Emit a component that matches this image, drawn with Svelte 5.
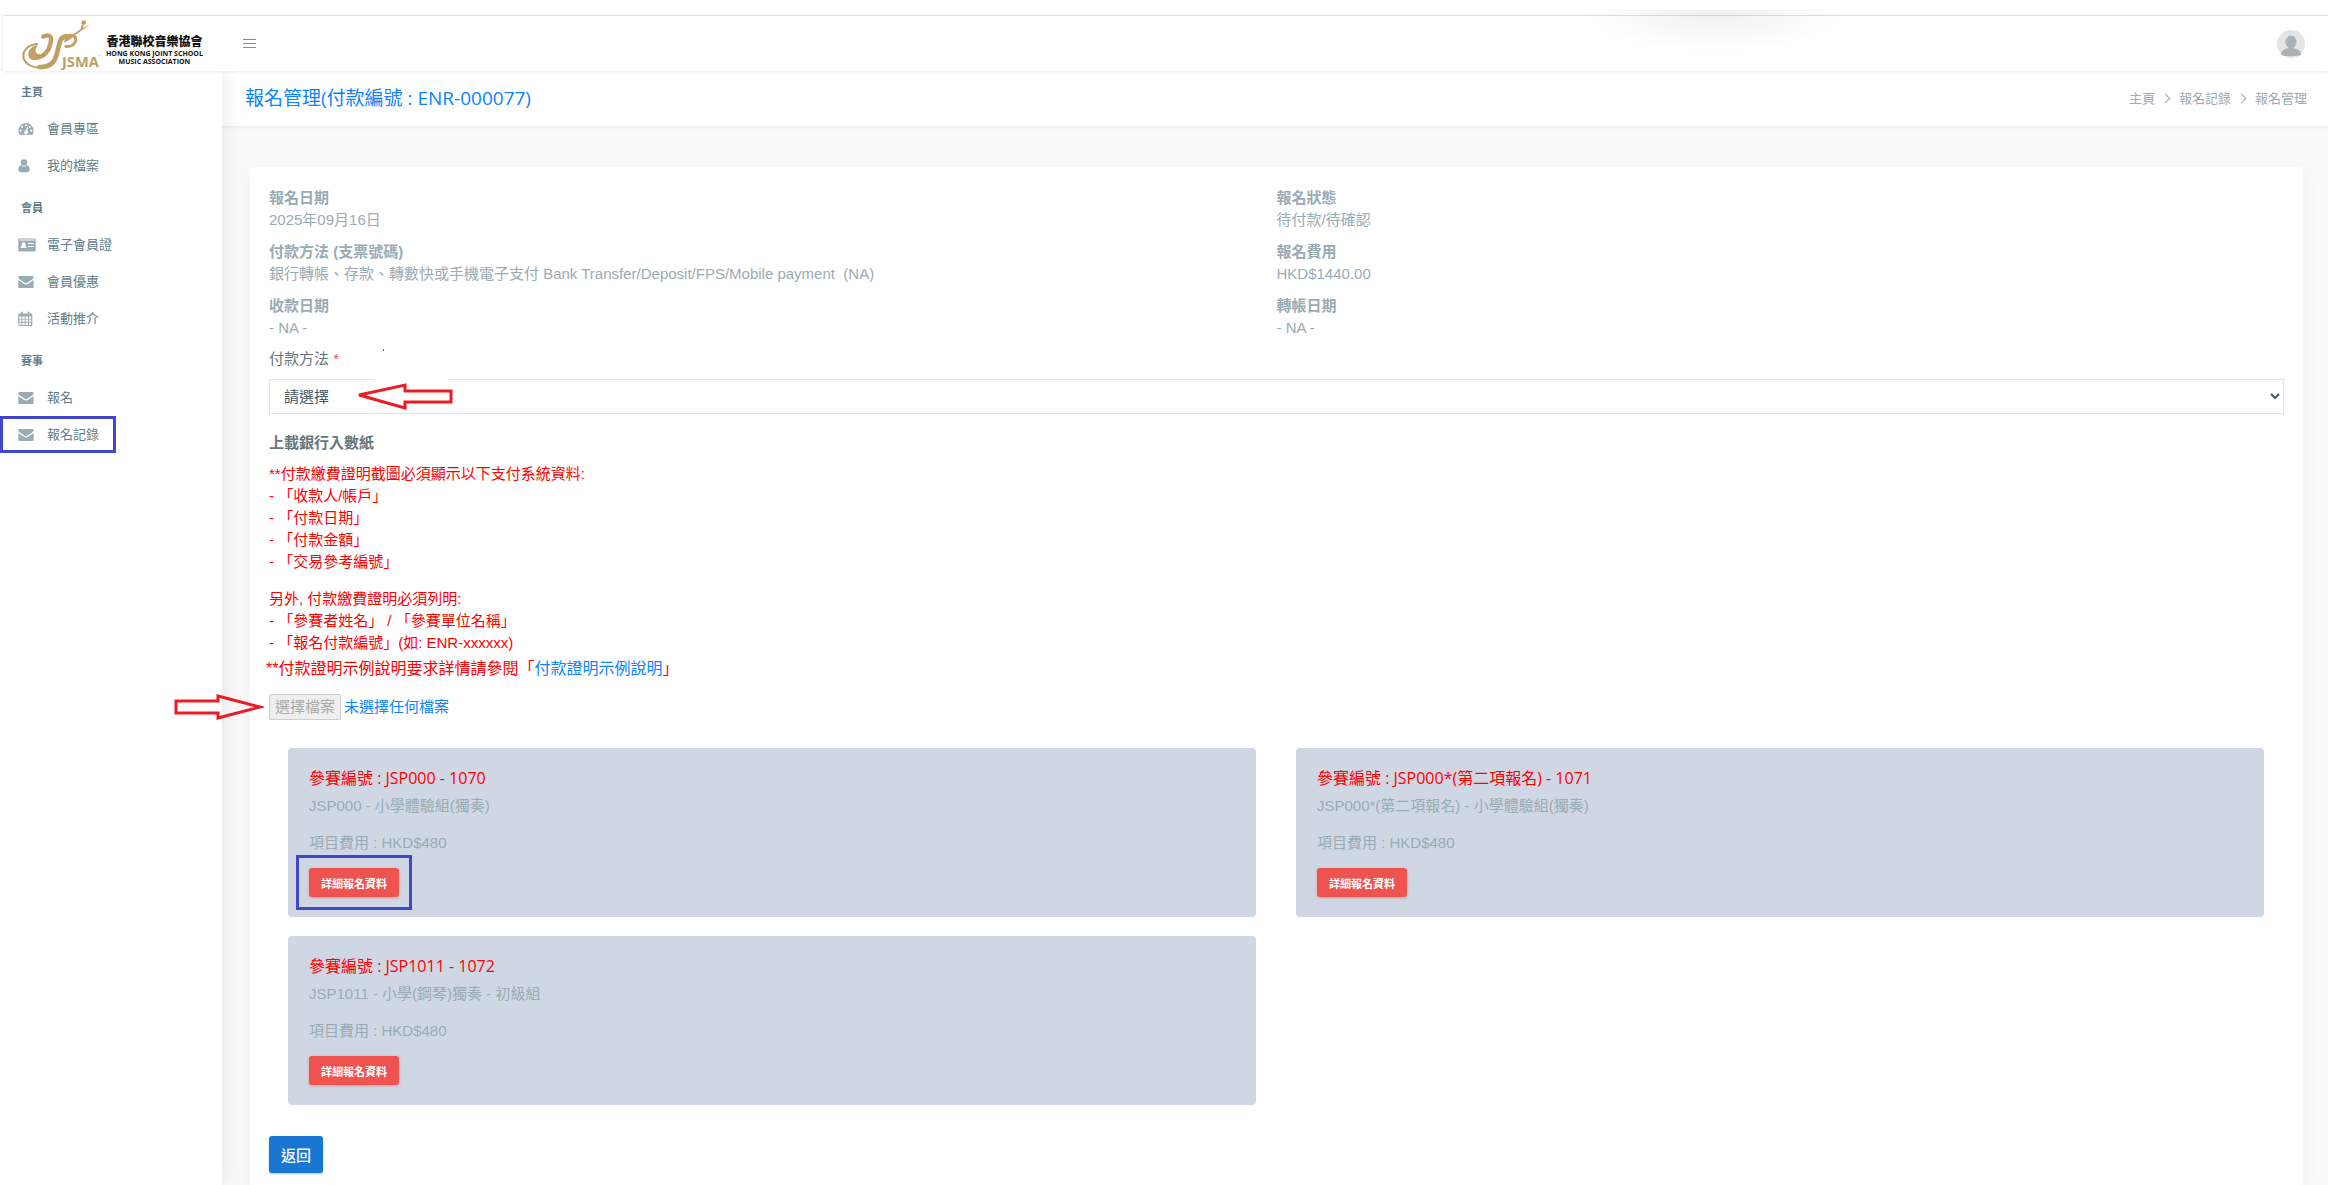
<script>
	const menu = [
		{
			title: "主頁",
			items: [
				{ label: "會員專區", icon: "gauge" },
				{ label: "我的檔案", icon: "user" },
			],
		},
		{
			title: "會員",
			items: [
				{ label: "電子會員證", icon: "card" },
				{ label: "會員優惠", icon: "mail" },
				{ label: "活動推介", icon: "calendar" },
			],
		},
		{
			title: "賽事",
			items: [
				{ label: "報名", icon: "mail" },
				{ label: "報名記錄", icon: "mail", marked: true },
			],
		},
	];

	const details = [
		["報名日期", "2025年09月16日"],
		["報名狀態", "待付款/待確認"],
		["付款方法 (支票號碼)", "銀行轉帳、存款、轉數快或手機電子支付 Bank Transfer/Deposit/FPS/Mobile payment\u00a0 (NA)"],
		["報名費用", "HKD$1440.00"],
		["收款日期", "- NA -"],
		["轉帳日期", "- NA -"],
	];

	const entries = [
		{ code: "JSP000", id: 1070, name: "小學體驗組(獨奏)", fee: 480, marked: true },
		{ code: "JSP000*(第二項報名)", id: 1071, name: "小學體驗組(獨奏)", fee: 480 },
		{ code: "JSP1011", id: 1072, name: "小學(鋼琴)獨奏 - 初級組", fee: 480 },
	];

	let method = $state("");
</script>

{#snippet icon(name)}
	<svg class="icon" viewBox="0 0 18 16" aria-hidden="true">
		{#if name === "gauge"}
			<path fill-rule="evenodd" d="M8 2a7.6 7.6 0 0 0-7.6 7.6c0 1.7.4 3.1 1.1 4.2h13c.7-1.1 1.1-2.5 1.1-4.2A7.6 7.6 0 0 0 8 2zM8 3.2a1 1 0 1 1 0 2.2 1 1 0 0 1 0-2.2zM4.2 4.8a1 1 0 1 1 0 2.2 1 1 0 0 1 0-2.2zM2.7 8.6a1 1 0 1 1 0 2.2 1 1 0 0 1 0-2.2zM13.3 8.6a1 1 0 1 1 0 2.2 1 1 0 0 1 0-2.2zM11.8 4.8a1 1 0 1 1 0 2.2 1 1 0 0 1 0-2.2zM9.2 5.6l1 .3-1 3.7a2 2 0 1 1-1.1-.3z" />
		{:else if name === "user"}
			<circle cx="6" cy="4.5" r="3.3" />
			<path d="M3 7.3C1.1 7.7.3 9.3.3 11.6c0 1.6.9 2.6 2.4 2.6h6.6c1.5 0 2.4-1 2.4-2.6 0-2.3-.8-3.9-2.7-4.3a4.3 4.3 0 0 1-6 0z" />
		{:else if name === "card"}
			<path fill-rule="evenodd" d="M1.3 1.5h15.4c.6 0 1 .4 1 1v11c0 .6-.4 1-1 1H1.3c-.6 0-1-.4-1-1v-11c0-.6.4-1 1-1zM1.3 2.6v.8h15.4v-.8zM5.5 5.3a1.7 1.7 0 0 0-1.3 2.9c-1 .3-1.5 1.2-1.5 2.8h5.8c0-1.6-.6-2.5-1.5-2.8a1.7 1.7 0 0 0-1.5-2.9zM10 6v1.1h5.7V6zM10 9v1.1h5.7V9z" />
		{:else if name === "mail"}
			<path d="M.3 3.3c0-.7.5-1.2 1.2-1.2h12.9c.7 0 1.2.5 1.2 1.2 0 .8-.5 1.5-1.2 2L9.7 8.6c-1.3.9-2.1.9-3.4 0L1.5 5.3C.8 4.8.3 4 .3 3.3z" />
			<path d="M.3 5.9l5.2 3.7c1.8 1.3 3.2 1.3 5 0l5.1-3.7v7c0 .7-.6 1.2-1.2 1.2H1.5c-.7 0-1.2-.5-1.2-1.2z" />
		{:else}
			<path fill-rule="evenodd" d="M1.4 2.4h1.5V1.5a1 1 0 0 1 2 0v.9h4.7v-.9a1 1 0 0 1 2 0v.9h1.5c.7 0 1.2.5 1.2 1.2v10.2c0 .7-.5 1.2-1.2 1.2H1.4c-.7 0-1.2-.5-1.2-1.2V3.6c0-.7.5-1.2 1.2-1.2zM1.3 5.6v2.1h2.1V5.6zm3 0v2.1h2.4V5.6zm3.3 0v2.1H10V5.6zm3.3 0v2.1h2.2V5.6zM1.3 8.6v2.2h2.1V8.6zm3 0v2.2h2.4V8.6zm3.3 0v2.2H10V8.6zm3.3 0v2.2h2.2V8.6zM1.3 11.7V14h2.1v-2.3zm3 0V14h2.4v-2.3zm3.3 0V14H10v-2.3zm3.3 0V14h2.2v-2.3z" />
		{/if}
	</svg>
{/snippet}

<div class="page">
	<header class="topbar">
		<div class="brand">
			<svg class="logo" viewBox="60 48 246 156" role="img" aria-label="JSMA">
				<g fill="none" stroke="#c19f64" stroke-linecap="round">
					<path d="M112 126C84 129 69 144 70 163c1 20 23 34 52 34" stroke-width="6" />
					<path d="M118 195c30 2 46-12 52-38l9-35c3-12 9-19 20-19" stroke-width="14" />
					<path d="M130 104c8-5 18-5 22 1 3 5 1 13-1 21-4 20-18 37-36 39" stroke-width="13" />
					<path d="M196 101c20-4 34 1 31 15-3 12-14 19-29 17" stroke-width="9" />
				</g>
				<g fill="#c19f64">
					<path d="M113 129c-19 4-29 16-28 29 1 15 17 20 33 14l8-15c-17 3-26-10-13-28z" />
					<path d="M192 122c14-6 26-15 38-26l41-29-22 10 2-9-5-1-5 15c-18 13-32 23-47 30z" />
					<circle cx="251" cy="62" r="7" />
					<circle cx="298" cy="161" r="2" />
				</g>
				<text x="186" y="194" class="logo-text">JSMA</text>
			</svg>
			<div class="brand-name">
				<strong>香港聯校音樂協會</strong>
				<span>HONG KONG JOINT SCHOOL</span>
				<span>MUSIC ASSOCIATION</span>
			</div>
		</div>
		<button class="toggle" aria-label="選單"><i></i><i></i><i></i></button>
		<button class="avatar" aria-label="帳戶">
			<svg viewBox="0 0 28 28">
				<circle cx="14" cy="14" r="14" fill="#e3e5e6" />
				<ellipse cx="14" cy="12" rx="5.5" ry="6.5" fill="#aab2b7" />
				<path d="M4 25c0-5 4-6 8-7h4c4 1 8 2 8 7-5 1.5-15 1.5-20 0z" fill="#aab2b7" />
			</svg>
		</button>
		<div class="notch"></div>
	</header>

	<div class="body">
		<nav class="sidebar">
			{#each menu as group}
				<div class="group">
					<h2>{group.title}</h2>
					<ul>
						{#each group.items as item}
							<li class:marked={item.marked}>
								<a href="#top">{@render icon(item.icon)}<span>{item.label}</span></a>
							</li>
						{/each}
					</ul>
				</div>
			{/each}
		</nav>

		<main>
			<div class="titlebar">
				<h1>報名管理(付款編號 : ENR-000077)</h1>
				<ol class="crumbs">
					<li><a href="#top">主頁</a></li>
					<li><a href="#top">報名記錄</a></li>
					<li>報名管理</li>
				</ol>
			</div>

			<section class="panel">
				<dl class="details">
					{#each details as [label, value]}
						<div>
							<dt>{label}</dt>
							<dd>{value}</dd>
						</div>
					{/each}
				</dl>

				<label class="method-label" for="method">付款方法 <span>*</span></label>
				<div class="method">
					<select id="method" bind:value={method}>
						<option value="">請選擇</option>
					</select>
					<svg class="arrow-left" viewBox="0 0 100 62" aria-hidden="true">
						<rect x="19" y="30" width="74" height="6" fill="#fff" />
						<rect x="28" y="0" width="1" height="2" fill="#ed1c24" />
						<path d="M4 46L50 36v6h46v11H50v6z" />
					</svg>
				</div>

				<h3>上載銀行入數紙</h3>
				<div class="notes">
					<p>
						**付款繳費證明截圖必須顯示以下支付系統資料:<br />
						- 「收款人/帳戶」<br />
						- 「付款日期」<br />
						- 「付款金額」<br />
						- 「交易參考編號」
					</p>
					<p>
						另外, 付款繳費證明必須列明:<br />
						- 「參賽者姓名」 / 「參賽單位名稱」<br />
						- 「報名付款編號」(如: ENR-xxxxxx)
					</p>
				</div>
				<p class="sample">**付款證明示例說明要求詳情請參閱「<a href="#top">付款證明示例說明</a>」</p>

				<div class="upload">
					<label>
						<input type="file" disabled />
						<span class="choose">選擇檔案</span>
						<span class="chosen">未選擇任何檔案</span>
					</label>
					<svg class="arrow-right" viewBox="0 0 92 28" aria-hidden="true">
						<path d="M88 14L46 3v5H4v12h42v5z" />
					</svg>
				</div>

				<div class="entries">
					{#each entries as entry}
						<article>
							<h4>參賽編號 : {entry.code} - {entry.id}</h4>
							<p>{entry.code} - {entry.name}</p>
							<p class="fee">項目費用 : HKD${entry.fee}</p>
							<div class="action" class:marked={entry.marked}>
								<button>詳細報名資料</button>
							</div>
						</article>
					{/each}
				</div>

				<button class="back">返回</button>
			</section>
		</main>
	</div>
</div>

<style>
	:global(body) {
		background: #fff;
	}
	.page {
		box-sizing: border-box;
		min-height: 100vh;
		padding-top: 15px;
		display: flex;
		flex-direction: column;
		overflow: hidden;
		font-family: "Liberation Sans", "Noto Sans CJK TC", sans-serif;
		font-size: 15px;
		line-height: 22px;
		color: #67757c;
	}
	h1, h2, h3, h4, p, ul, ol, dl, dd {
		margin: 0;
		padding: 0;
	}
	ul, ol {
		list-style: none;
	}
	a {
		color: inherit;
		text-decoration: none;
	}
	button {
		border: 0;
		padding: 0;
		font-family: inherit;
		cursor: pointer;
	}

	.topbar {
		position: relative;
		z-index: 3;
		display: flex;
		align-items: center;
		height: 55px;
		margin-left: 3px;
		padding-right: 23px;
		border-top: 1px solid #dfdfdf;
		background: #fff;
		box-shadow: 0 1px 3px rgba(0, 0, 0, 0.08);
	}
	.brand {
		display: flex;
		align-items: center;
		width: 240px;
	}
	.logo {
		width: 82px;
		height: 52px;
		margin-left: 17px;
	}
	.logo-text {
		font: bold 44px "Open Sans", sans-serif;
		fill: #c19f64;
	}
	.brand-name {
		display: flex;
		flex-direction: column;
		align-items: center;
		margin-left: 4px;
		padding-top: 12px;
		color: #111;
		font-family: "Open Sans", "Noto Sans CJK TC", sans-serif;
		font-size: 7px;
		font-weight: 700;
		line-height: 8px;
		white-space: nowrap;
	}
	.brand-name strong {
		font-size: 12px;
		font-weight: 900;
		line-height: 16px;
	}
	.toggle {
		display: flex;
		flex-direction: column;
		gap: 3px;
		width: 13px;
		background: none;
	}
	.toggle i {
		height: 1px;
		background: #78909c;
	}
	.avatar {
		width: 28px;
		height: 28px;
		margin-left: auto;
		background: none;
	}
	.avatar svg {
		display: block;
	}
	.notch {
		position: absolute;
		top: -6px;
		left: 68%;
		width: 260px;
		height: 42px;
		background: radial-gradient(ellipse 50% 100% at 50% 0, rgba(0, 0, 0, 0.06), transparent);
		pointer-events: none;
	}

	.body {
		flex: 1;
		display: flex;
	}
	.sidebar {
		position: relative;
		z-index: 1;
		flex: 0 0 222px;
		padding-top: 3px;
		background: #fff;
		box-shadow: 1px 0 20px rgba(0, 0, 0, 0.1);
	}
	.group {
		margin-bottom: 6px;
	}
	.group h2 {
		padding-left: 21px;
		font-size: 11px;
		line-height: 36px;
		color: #607d8b;
	}
	.group a {
		display: flex;
		align-items: center;
		height: 37px;
		padding-left: 18px;
		font-size: 13px;
		color: #607d8b;
	}
	.group span {
		margin-left: 11px;
	}
	.group li.marked {
		width: 116px;
		outline: 3px solid #3f48cc;
		outline-offset: -3px;
	}
	.icon {
		width: 18px;
		height: 16px;
		fill: #99abb4;
	}

	main {
		flex: 1;
		min-width: 0;
		display: flex;
		flex-direction: column;
		background: #fafafa;
	}
	.titlebar {
		display: flex;
		align-items: center;
		justify-content: space-between;
		height: 55px;
		padding: 0 21px 0 23px;
		background: #fff;
		box-shadow: 0 1px 3px rgba(0, 0, 0, 0.08);
	}
	h1 {
		padding-bottom: 2px;
		font: 400 19px/28px "Open Sans", "Noto Sans CJK TC", sans-serif;
		color: #0d83ff;
	}
	.crumbs {
		display: flex;
		font-size: 13px;
		color: #99abb4;
	}
	.crumbs li {
		display: flex;
		align-items: center;
	}
	.crumbs li + li::before {
		content: "";
		width: 6px;
		height: 6px;
		margin: 0 10px 0 7px;
		border-top: 1px solid #99abb4;
		border-right: 1px solid #99abb4;
		transform: rotate(45deg);
	}
	.panel {
		flex: 1;
		margin: 41px 25px 0 28px;
		padding: 20px 19px 12px;
		border-radius: 4px 4px 0 0;
		background: #fff;
		box-shadow: 0 5px 20px rgba(0, 0, 0, 0.05);
	}
	.details {
		display: grid;
		grid-template-columns: 1fr 1fr;
		row-gap: 10px;
		color: #99abb4;
	}
	dt {
		font-weight: 700;
	}
	.method-label {
		display: block;
		margin: 9px 0;
	}
	.method-label span {
		color: #ef5350;
	}
	.method {
		position: relative;
	}
	select {
		display: block;
		width: 100%;
		height: 35px;
		padding: 0 2px 0 10px;
		border: 1px solid #e2e4e6;
		border-radius: 0;
		background: #fff;
		color: #455a64;
		font: inherit;
	}
	.arrow-left,
	.arrow-right {
		position: absolute;
		fill: #fff;
		stroke: #ed1c24;
		stroke-width: 3;
		pointer-events: none;
	}
	.arrow-left rect {
		stroke: none;
	}
	.arrow-left {
		top: -30px;
		left: 86px;
		width: 100px;
		height: 62px;
	}
	.arrow-right {
		top: -1px;
		right: 100%;
		width: 92px;
		height: 28px;
		margin-right: 5px;
		z-index: 2;
		fill: none;
	}
	h3 {
		margin: 18px 0 9px;
		font-size: 15px;
		line-height: 22px;
	}
	.notes {
		display: flex;
		flex-direction: column;
		gap: 15px;
		color: #f00;
	}
	.sample {
		margin: 4px 0 14px -3px;
		font-size: 16px;
		color: #f00;
	}
	.sample a {
		color: #0d83ff;
	}
	.upload {
		position: relative;
		z-index: 2;
	}
	.upload label {
		display: flex;
		align-items: center;
		gap: 3px;
	}
	.upload input {
		position: absolute;
		width: 1px;
		height: 1px;
		opacity: 0;
	}
	.choose {
		padding: 1px 5px;
		border: 1px solid #cfcfcf;
		border-radius: 2px;
		background: #efefef;
		color: #aaa;
	}
	.chosen {
		color: #0d83ff;
	}
	.entries {
		display: grid;
		grid-template-columns: 1fr 1fr;
		gap: 19px 40px;
		margin: 28px 20px 31px 19px;
	}
	article {
		padding: 18px 21px 20px;
		border-radius: 4px;
		background: #d0d7e4;
		color: #99abb4;
	}
	h4 {
		margin-bottom: 5px;
		font: 400 16px/24px "Open Sans", "Noto Sans CJK TC", sans-serif;
		color: #f00;
	}
	.fee {
		margin: 15px 0 14px;
	}
	.action {
		display: flex;
		width: max-content;
	}
	.action.marked {
		outline: 3px solid #3f48cc;
		outline-offset: 10px;
	}
	.action button {
		height: 29px;
		padding: 0 12px;
		border-radius: 3px;
		background: #ef5350;
		box-shadow: 0 1px 3px rgba(239, 83, 80, 0.5);
		color: #fff;
		font-size: 11px;
		font-weight: 700;
	}
	.back {
		display: block;
		height: 37px;
		padding: 0 12px;
		border-radius: 3px;
		background: #1976d2;
		box-shadow: 0 1px 2px rgba(25, 118, 210, 0.4);
		color: #fff;
		font-size: 15px;
		font-weight: 500;
	}
</style>
